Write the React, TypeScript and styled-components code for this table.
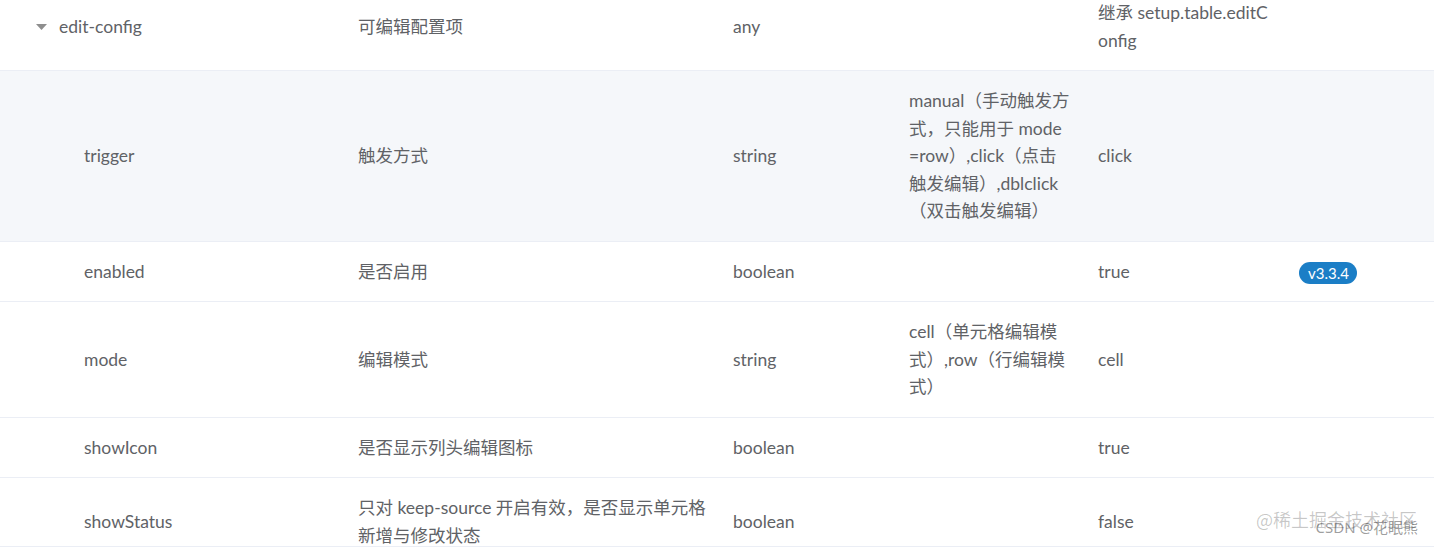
import React from 'react';
import styled, { createGlobalStyle } from 'styled-components';

type ConfigRow = {
  name: string;
  level: number;
  desc: string;
  type: string;
  values: string;
  defaultValue: string;
  version?: string;
  active?: boolean;
};

const rows: ConfigRow[] = [
  {
    name: 'edit-config',
    level: 0,
    desc: '可编辑配置项',
    type: 'any',
    values: '',
    defaultValue: '继承 setup.table.editConfig',
  },
  {
    name: 'trigger',
    level: 1,
    desc: '触发方式',
    type: 'string',
    values: 'manual（手动触发方式，只能用于 mode=row）,click（点击触发编辑）,dblclick（双击触发编辑）',
    defaultValue: 'click',
    active: true,
  },
  {
    name: 'enabled',
    level: 1,
    desc: '是否启用',
    type: 'boolean',
    values: '',
    defaultValue: 'true',
    version: 'v3.3.4',
  },
  {
    name: 'mode',
    level: 1,
    desc: '编辑模式',
    type: 'string',
    values: 'cell（单元格编辑模式）,row（行编辑模式）',
    defaultValue: 'cell',
  },
  {
    name: 'showIcon',
    level: 1,
    desc: '是否显示列头编辑图标',
    type: 'boolean',
    values: '',
    defaultValue: 'true',
  },
  {
    name: 'showStatus',
    level: 1,
    desc: '只对 keep-source 开启有效，是否显示单元格新增与修改状态',
    type: 'boolean',
    values: '',
    defaultValue: 'false',
  },
];

const GlobalStyle = createGlobalStyle`
  html, body {
    margin: 0;
    padding: 0;
    background: #fff;
  }

  body {
    font-family: Lato, "Noto Sans CJK SC", sans-serif;
    color: #606266;
  }
`;

const Viewport = styled.div`
  position: relative;
  width: 1434px;
  height: 546px;
  overflow: hidden;
  border-bottom: 1px solid #ebeef5;
`;

const Table = styled.div`
  margin-top: -17px;
`;

const Row = styled.div<{ $active?: boolean }>`
  display: grid;
  grid-template-columns: 346px 375px 176px 189px 201px 1fr;
  align-items: center;
  background: ${(p) => (p.$active ? '#f5f7fa' : '#fff')};
  border-bottom: 1px solid #ebeef5;
`;

// $pr narrows the wrapping width of a column without moving where the next one starts
const Cell = styled.div<{ $pr?: number }>`
  padding: 16px ${(p) => p.$pr ?? 12}px 16px 12px;
  font-size: 17.5px;
  line-height: 27.5px;
  word-break: break-all;
`;

const NameCell = styled(Cell)<{ $level: number }>`
  display: flex;
  align-items: center;
  padding-left: ${(p) => (p.$level === 0 ? 36 : 84)}px;
`;

const Caret = styled.svg`
  width: 11px;
  height: 6px;
  margin-right: 12px;
  flex-shrink: 0;
`;

const Badge = styled.span`
  display: inline-block;
  height: 22px;
  padding: 0 8px 0 9px;
  border-radius: 11px;
  background: #1b7ec6;
  color: #fff;
  font-size: 15px;
  line-height: 22px;
  vertical-align: middle;
`;

const Watermark = styled.div`
  position: absolute;
  right: 16px;
  bottom: 6px;
  width: 162px;
  height: 36px;
  pointer-events: none;
`;

const MarkMain = styled.span`
  position: absolute;
  left: 0;
  top: 3px;
  font-family: "Noto Sans CJK SC", sans-serif;
  font-size: 18px;
  line-height: 24px;
  color: rgba(0, 0, 0, 0.22);
  white-space: nowrap;
`;

const MarkSub = styled.span`
  position: absolute;
  right: 0;
  top: 14px;
  font-family: "Noto Sans", "Noto Sans CJK SC", sans-serif;
  font-size: 15px;
  line-height: 18px;
  color: rgba(0, 0, 0, 0.4);
  white-space: nowrap;
`;

export default function App() {
  return (
    <>
      <GlobalStyle />
      <Viewport>
        <Table>
          {rows.map((row) => (
            <Row key={row.name} $active={row.active}>
              <NameCell $level={row.level}>
                {row.level === 0 && (
                  <Caret viewBox="0 0 11 6">
                    <polygon points="0,0 11,0 5.5,6" fill="#8e8e8e" />
                  </Caret>
                )}
                {row.name}
              </NameCell>
              <Cell $pr={5}>{row.desc}</Cell>
              <Cell>{row.type}</Cell>
              <Cell $pr={16}>{row.values}</Cell>
              <Cell $pr={15}>{row.defaultValue}</Cell>
              <Cell>{row.version && <Badge>{row.version}</Badge>}</Cell>
            </Row>
          ))}
        </Table>
        <Watermark>
          <MarkMain>@稀土掘金技术社区</MarkMain>
          <MarkSub>CSDN @花眠熊</MarkSub>
        </Watermark>
      </Viewport>
    </>
  );
}
